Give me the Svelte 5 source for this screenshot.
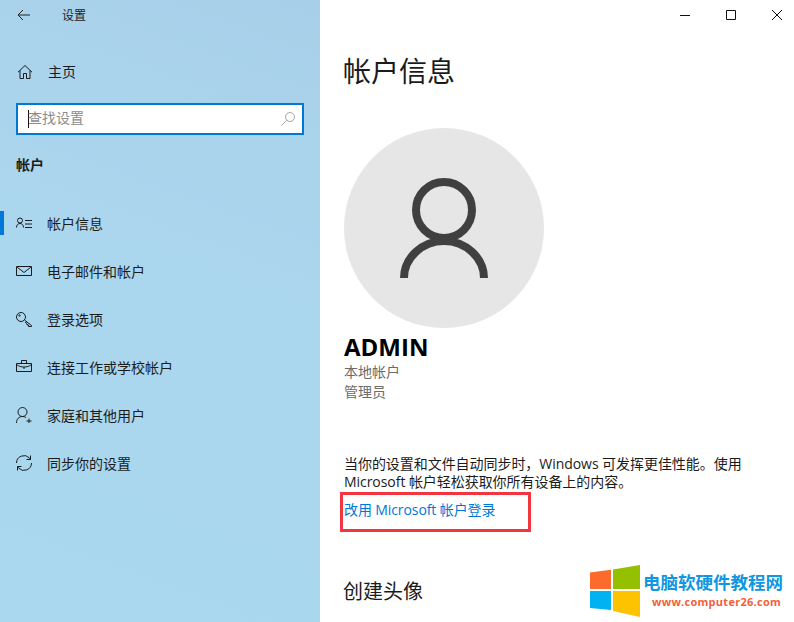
<script>
  const navItems = [
    { id: 'info', label: '帐户信息', active: true },
    { id: 'mail', label: '电子邮件和帐户' },
    { id: 'key', label: '登录选项' },
    { id: 'work', label: '连接工作或学校帐户' },
    { id: 'family', label: '家庭和其他用户' },
    { id: 'sync', label: '同步你的设置' }
  ];
</script>

<div class="window">
  <aside class="sidebar">
    <div class="titlebar">
      <svg width="16" height="16" viewBox="0 0 16 16"><path d="M7 3 2 8l5 5M2 8h12" /></svg>
      <span>设置</span>
    </div>

    <div class="home">
      <svg width="16" height="16" viewBox="0 0 16 16"><path d="M1 8.2 8 1.5l7 6.700M3 6.500v8h3.500v-5h3v5H13v-8" /></svg>
      <span>主页</span>
    </div>

    <div class="search">
      <i class="caret"></i>
      <span class="placeholder">查找设置</span>
      <svg width="14" height="14" viewBox="0 0 14 14"><circle cx="9" cy="5" r="4.500" /><path d="M5.800 8.200.5 13.500" /></svg>
    </div>

    <h2>帐户</h2>

    <nav>
      {#each navItems as item}
        <div class="nav-item" class:active={item.active}>
          <svg width="16" height="16" viewBox="0 0 16 16">
            {#if item.id === 'info'}
              <circle cx="4" cy="5.500" r="2.500" /><path d="M.5 12.500c0-2.500 1.500-4 3.500-4s3.500 1.500 3.500 4M9 5.500h7M9 9h7M9 12.500h7" />
            {:else if item.id === 'mail'}
              <path d="M.5 3.500h15v9H.5zM1 4l7 5.500L15 4" />
            {:else if item.id === 'key'}
              <circle cx="5" cy="6" r="4.500" /><circle cx="3.500" cy="4.500" r=".7" /><path d="M8.500 9l7 5.500v1h-3V14H11v-1.500L9 11" />
            {:else if item.id === 'work'}
              <path d="M.5 4.500h15v8H.5zM5.500 4.500v-3h5v3M.5 5.500C3 7.500 5.500 8 8 8s5-.5 7.500-2.500M7 9h2" />
            {:else if item.id === 'family'}
              <circle cx="6.500" cy="5" r="4.500" /><path d="M.5 16c0-4 2.500-6.500 6-6.500 1.500 0 2.500.4 3.500 1M13 11.500v5M10.500 14h5" />
            {:else}
              <path d="M.5 8a7.500 7.500 0 0 1 13-5l1 1.500M14.500.5v4h-4M15.500 8a7.500 7.500 0 0 1-13 5l-1-1.500M1.500 15.500v-4h4" />
            {/if}
          </svg>
          <span>{item.label}</span>
        </div>
      {/each}
    </nav>
  </aside>

  <main class="content">
    <div class="controls">
      <svg width="12" height="12" viewBox="0 0 12 12"><path d="M1 6.500h10" /></svg>
      <svg width="12" height="12" viewBox="0 0 12 12"><path d="M1.500 1.500h9v9h-9z" /></svg>
      <svg width="12" height="12" viewBox="0 0 12 12"><path d="M1 1l10 10M11 1 1 11" /></svg>
    </div>

    <h1>帐户信息</h1>

    <div class="avatar">
      <svg width="88" height="100" viewBox="0 0 88 100">
        <circle cx="44" cy="32" r="28" />
        <path d="M4 100c0-20 18-37 40-37s40 17 40 37" />
      </svg>
    </div>

    <div class="name">ADMIN</div>
    <div class="meta first">本地帐户</div>
    <div class="meta">管理员</div>

    <p class="hint">当你的设置和文件自动同步时，Windows 可发挥更佳性能。使用<br />Microsoft 帐户轻松获取你所有设备上的内容。</p>

    <div class="link-wrap">
      <span class="link">改用 Microsoft 帐户登录</span>
    </div>

    <h3>创建头像</h3>

    <div class="watermark">
      <svg width="52" height="52" viewBox="0 0 52 52">
        <path class="w-red" d="M0 7.500 21 4.700V24H0z" />
        <path class="w-green" d="M23 4.400 50 0V24H23z" />
        <path class="w-blue" d="M0 26h21v19L0 43z" />
        <path class="w-yellow" d="M23 26h27v26L23 46z" />
      </svg>
      <div class="w-text">
        <span class="w-title">电脑软硬件教程网</span>
        <span class="w-url">www.computer26.com</span>
      </div>
    </div>
  </main>
</div>

<style>
  :global(body) {
    margin: 0;
    background: #fff;
  }

  .window {
    width: 794px;
    height: 622px;
    display: grid;
    grid-template-columns: 320px 1fr;
    overflow: hidden;
    font-family: "Open Sans", "Noto Sans CJK SC", sans-serif;
    font-size: 14px;
    color: #1b1b1b;
  }

  svg {
    fill: none;
    stroke: currentColor;
    stroke-width: 1;
    flex-shrink: 0;
  }

  .sidebar {
    background: linear-gradient(200deg, #a8cfe9 0%, #abd6ee 40%, #a9d8ef 100%);
  }

  .titlebar {
    height: 30px;
    display: flex;
    align-items: center;
    gap: 30px;
    padding-left: 16px;
    font-size: 12px;
    color: #222;
  }

  .home {
    margin-top: 26px;
    height: 32px;
    display: flex;
    align-items: center;
    gap: 15px;
    padding-left: 17px;
  }

  .home span {
    margin-bottom: 2px;
  }

  .search {
    margin: 15px 16px 0 16px;
    height: 32px;
    box-sizing: border-box;
    border: 2px solid #0078d7;
    background: #fff;
    display: flex;
    align-items: center;
    padding: 0 7px 0 10px;
  }

  .caret {
    width: 1px;
    height: 18px;
    margin-right: -1px;
    background: #111;
  }

  .placeholder {
    flex: 1;
    margin-bottom: 4px;
    color: #8c8c8c;
  }

  .search svg {
    color: #a6a6a6;
  }

  h2 {
    margin: 0;
    padding: 18px 0 0 16px;
    height: 24px;
    font-size: 14px;
    line-height: 24px;
    font-weight: 700;
  }

  nav {
    margin-top: 22px;
  }

  .nav-item {
    height: 48px;
    display: flex;
    align-items: center;
    gap: 15px;
    padding-left: 16px;
    position: relative;
  }

  .nav-item.active::before {
    content: "";
    position: absolute;
    left: 0;
    top: 12px;
    width: 4px;
    height: 24px;
    background: #0078d7;
  }

  .content {
    position: relative;
    background: #fff;
    padding-left: 24px;
  }

  .controls {
    position: absolute;
    top: 9px;
    right: 11px;
    display: flex;
    gap: 34px;
    color: #111;
  }

  h1 {
    margin: 0 0 0 -1px;
    padding-top: 49px;
    font-size: 28px;
    line-height: 44px;
    font-weight: 400;
  }

  .avatar {
    margin-top: 35px;
    width: 200px;
    height: 200px;
    border-radius: 50%;
    background: #e6e6e6;
    display: flex;
    align-items: center;
    justify-content: center;
  }

  .avatar svg {
    stroke: #404040;
    stroke-width: 8;
  }

  .name {
    margin-top: 5px;
    font-size: 24px;
    line-height: 28px;
    font-weight: 700;
    color: #000;
  }

  .meta {
    font-size: 14px;
    line-height: 20px;
    color: #6b6b6b;
  }

  .meta.first {
    margin-top: 1px;
  }

  .hint {
    margin: 53px 0 0;
    font-size: 14px;
    line-height: 18px;
    letter-spacing: -0.050px;
  }

  .link-wrap {
    margin: 1px 0 0 -4px;
    width: 191px;
    height: 40px;
    box-sizing: border-box;
    border: 3px solid #f2353f;
    padding-left: 1px;
    line-height: 30px;
  }

  .link {
    color: #0078d7;
    font-size: 14px;
    letter-spacing: -0.100px;
    white-space: nowrap;
  }

  h3 {
    margin: 0 0 0 -1px;
    padding-top: 44px;
    font-size: 20px;
    line-height: 32px;
    font-weight: 400;
  }

  .watermark {
    position: absolute;
    left: 270px;
    top: 565px;
    display: flex;
    gap: 1px;
    background: #fff;
  }

  .watermark svg {
    stroke: none;
  }

  .w-red { fill: #fc6a2c; }
  .w-green { fill: #94c000; }
  .w-blue { fill: #00b2f2; }
  .w-yellow { fill: #fdc300; }

  .w-text {
    display: flex;
    flex-direction: column;
    padding-top: 7px;
  }

  .w-title {
    font-size: 17.500px;
    line-height: 20px;
    font-weight: 700;
    color: #1196e0;
    white-space: nowrap;
  }

  .w-url {
    margin: 1px 0 0 9px;
    font-size: 11px;
    line-height: 18px;
    font-weight: 700;
    color: #f4603a;
    letter-spacing: 0.280px;
  }
</style>
